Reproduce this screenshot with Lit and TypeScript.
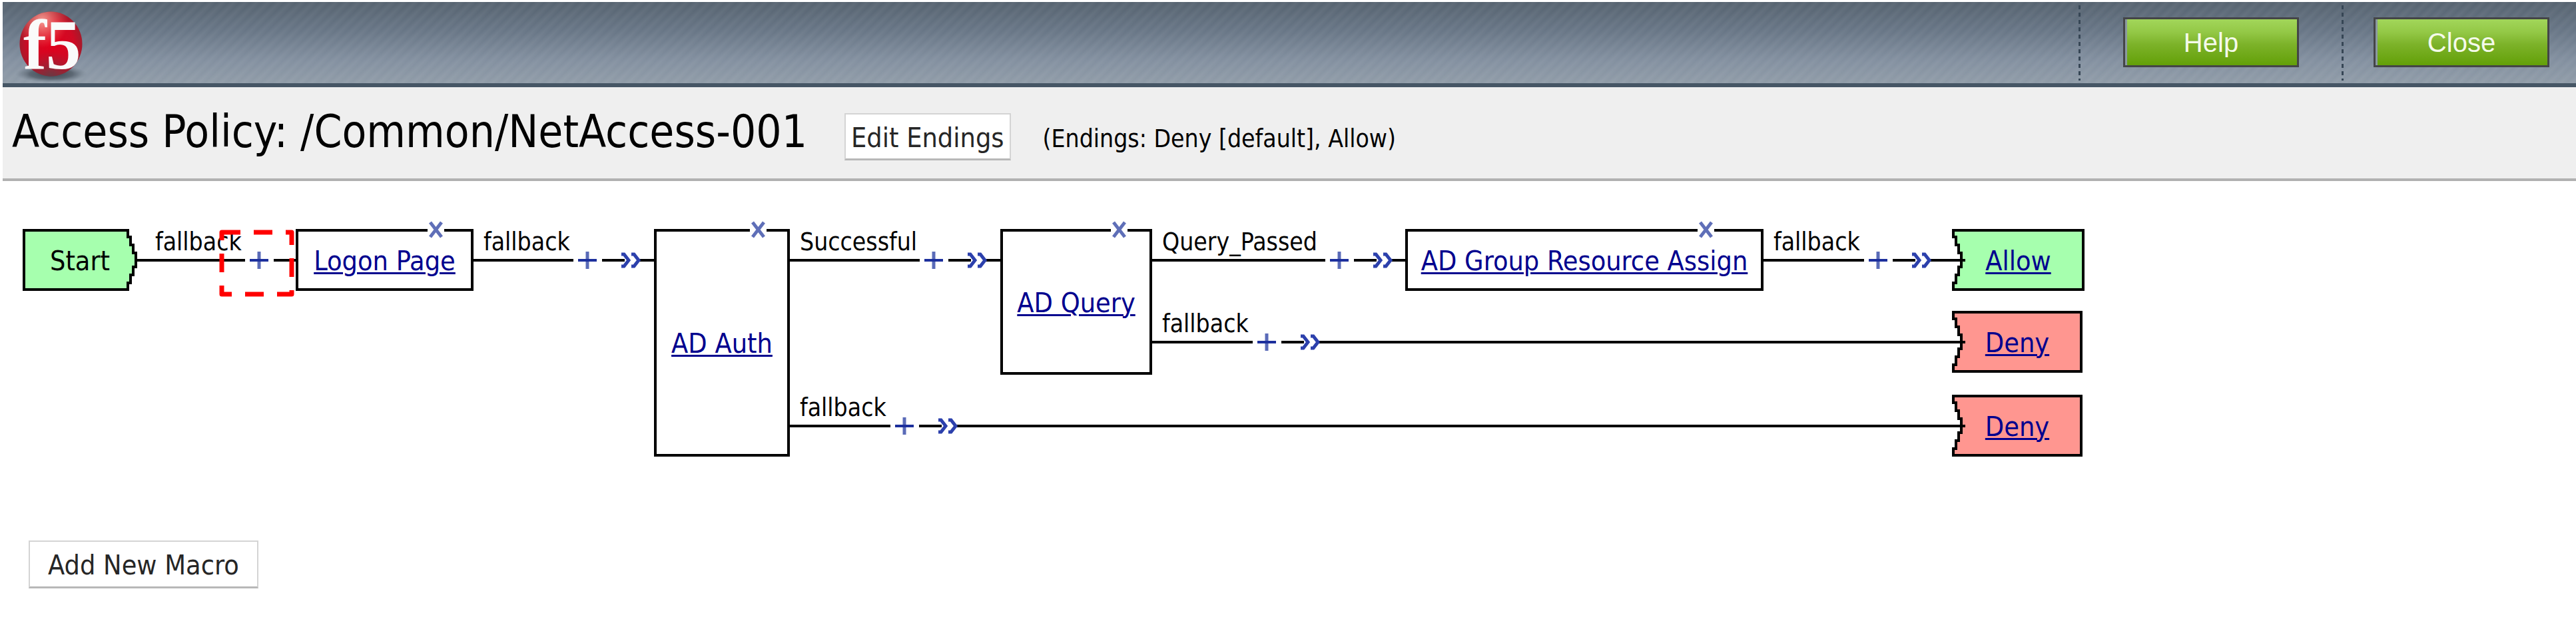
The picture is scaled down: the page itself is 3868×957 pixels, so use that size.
import { LitElement, html, svg, css } from "lit";
import { customElement } from "lit/decorators.js";
import { styleMap } from "lit/directives/style-map.js";
import { classMap } from "lit/directives/class-map.js";

interface PolicyNode {
  label: string;
  kind: "start" | "action" | "allow" | "deny";
  x: number;
  y: number;
  w: number;
  h: number;
  close?: number;
}

interface Branch {
  label: string;
  from: number;
  to: number;
  y: number;
  plus: number;
  arrow: boolean;
}

const ROW = [119, 242, 368];

const NODES: PolicyNode[] = [
  { label: "Start", kind: "start", x: 34, y: 72, w: 172, h: 93 },
  { label: "Logon Page", kind: "action", x: 444, y: 72, w: 267, h: 93, close: 654 },
  { label: "AD Auth", kind: "action", x: 982, y: 72, w: 204, h: 342, close: 1138 },
  { label: "AD Query", kind: "action", x: 1502, y: 72, w: 228, h: 219, close: 1680 },
  { label: "AD Group Resource Assign", kind: "action", x: 2110, y: 72, w: 538, h: 93, close: 2561 },
  { label: "Allow", kind: "allow", x: 2931, y: 72, w: 199, h: 93 },
  { label: "Deny", kind: "deny", x: 2931, y: 195, w: 196, h: 93 },
  { label: "Deny", kind: "deny", x: 2931, y: 321, w: 196, h: 93 },
];

const BRANCHES: Branch[] = [
  { label: "fallback", from: 205, to: 444, y: ROW[0], plus: 389, arrow: false },
  { label: "fallback", from: 711, to: 982, y: ROW[0], plus: 882, arrow: true },
  { label: "Successful", from: 1186, to: 1502, y: ROW[0], plus: 1402, arrow: true },
  { label: "Query_Passed", from: 1730, to: 2110, y: ROW[0], plus: 2011, arrow: true },
  { label: "fallback", from: 2648, to: 2951, y: ROW[0], plus: 2820, arrow: true },
  { label: "fallback", from: 1730, to: 2951, y: ROW[1], plus: 1902, arrow: true },
  { label: "fallback", from: 1186, to: 2951, y: ROW[2], plus: 1358, arrow: true },
];

@customElement("app-root")
export class AppRoot extends LitElement {
  static styles = css`
    :host {
      display: block;
      background: #fff;
      color: #000;
      font-family: "DejaVu Sans Condensed", "DejaVu Sans", Tahoma, sans-serif;
    }
    * {
      box-sizing: border-box;
    }
    .page {
      padding: 3px 0 0 4px;
    }
    .top {
      display: flex;
      align-items: stretch;
      justify-content: space-between;
      height: 128px;
      border-bottom: 6px solid #465665;
      background:
        repeating-linear-gradient(135deg, #ffffff00, #ffffff0c 6px, #ffffff00 12px),
        linear-gradient(#566370, #687686 35%, #8390a0 72%, #909ca8);
    }
    .logo {
      display: block;
      width: 140px;
      height: 122px;
    }
    .tools {
      display: flex;
      padding-right: 40px;
    }
    .tool {
      display: flex;
      align-items: flex-start;
      padding: 23px 64px 0 0;
    }
    .tool:last-child {
      padding-right: 0;
    }
    .rule {
      width: 3px;
      height: 113px;
      margin-top: -18px;
      margin-right: 64px;
      background: repeating-linear-gradient(#364655 0 6px, transparent 6px 11px);
    }
    .tool:last-child .rule {
      margin-right: 45px;
    }
    .green {
      width: 264px;
      height: 75px;
      padding: 0;
      border: 3px solid #444547;
      background: linear-gradient(#a2d65a, #93c846 28%, #7cb229 55%, #63a008);
      box-shadow: inset 3px 0 0 #8b99a0;
      color: #f4faea;
      font: 40px/48px "Liberation Sans", Arial, sans-serif;
      cursor: pointer;
    }
    .bar {
      display: flex;
      align-items: baseline;
      padding: 27px 14px 27px;
      border-bottom: 4px solid #b1b1b1;
      background: #efefef;
    }
    .bar h1 {
      margin: 0;
      font-size: 67px;
      line-height: 80px;
      font-weight: 400;
    }
    .plain {
      padding: 11px 8px 7px;
      border: 2px solid #d4d4d4;
      border-bottom: 3px solid #b8b8b8;
      background: #fff;
      color: #262626;
      font: inherit;
      font-size: 41px;
      line-height: 48px;
      cursor: pointer;
    }
    .bar .plain {
      margin: 0 48px 0 56px;
    }
    .endings {
      font-size: 37px;
      line-height: 48px;
    }
    .diagram {
      position: relative;
      height: 540px;
      overflow: hidden;
    }
    .wires {
      position: absolute;
      left: -4px;
      top: 0;
      width: 100%;
      height: 100%;
      overflow: visible;
    }
    .canvas {
      position: absolute;
      inset: 0 0 0 -4px;
    }
    .node {
      position: absolute;
      display: flex;
      align-items: center;
      justify-content: center;
      padding-top: 2px;
      font-size: 41px;
      line-height: 48px;
      white-space: nowrap;
    }
    .node.action {
      border: 4px solid #000;
      background: #fff;
    }
    .node a {
      color: #00008e;
      text-decoration-thickness: 3px;
      text-underline-offset: 3px;
    }
    .branch {
      position: absolute;
      font-size: 37px;
      line-height: 44px;
      white-space: nowrap;
    }
    .icon {
      position: absolute;
      display: block;
      padding: 0;
      border: 0;
      background: #fff;
      cursor: pointer;
    }
    .icon svg {
      display: block;
    }
    .mark {
      position: absolute;
      left: 0;
      top: 0;
      width: 100%;
      height: 100%;
      pointer-events: none;
    }
    .foot {
      padding: 0 39px 73px;
    }
    .foot .plain {
      padding: 11px 27px 8px;
    }
  `;

  private px(x: number, y: number, w?: number, h?: number) {
    return styleMap({
      left: `${x}px`,
      top: `${y}px`,
      ...(w ? { width: `${w}px` } : {}),
      ...(h ? { height: `${h}px` } : {}),
    });
  }

  private shape(n: PolicyNode) {
    const t = n.y + 2;
    const l = n.x + 2;
    const r = n.x + n.w - 2;
    if (n.kind === "start") {
      return svg`<path d="M${l} ${t}H${r - 12}v10h4v12h4v12h4v21h-4v12h-4v12h-4v10H${l}Z" fill="#a6ffae" stroke="#000" stroke-width="4"/>`;
    }
    const fill = n.kind === "allow" ? "#a6ffae" : "#ff9690";
    return svg`<path d="M${l} ${t}H${r}v89H${l}v-10h4v-12h4v-12h4v-21h-4v-12h-4v-12h-4Z" fill=${fill} stroke="#000" stroke-width="4"/>`;
  }

  private wire(b: Branch) {
    const gapL = b.plus - 21;
    const gapR = b.plus + 22;
    const y = b.y;
    const a = b.plus + 50;
    return svg`
      <path d="M${b.from} ${y}H${gapL}M${gapR} ${y}H${b.arrow ? a + 6 : b.to}${b.arrow ? `M${a + 28} ${y}H${b.to}` : ""}" stroke="#000" stroke-width="4" fill="none"/>
      ${b.arrow
        ? svg`<path d="M${a + 1} ${y - 9}h4l7 9l-7 9h-4M${a + 16} ${y - 9}h4l7 9l-7 9h-4" stroke="#2c40ac" stroke-width="5" fill="none"/>`
        : ""}`;
  }

  render() {
    return html`
      <div class="page">
        <header class="top">
          <svg class="logo" viewBox="4 3 140 122" role="img" aria-label="f5">
            <defs>
              <radialGradient id="ball" cx="50%" cy="50%" r="52%">
                <stop offset="0" stop-color="#e0001c" />
                <stop offset=".7" stop-color="#d00a24" />
                <stop offset="1" stop-color="#a01c2c" />
              </radialGradient>
              <radialGradient id="shine" cx="36%" cy="14%" r="42%">
                <stop offset="0" stop-color="#ffc0b0" stop-opacity=".8" />
                <stop offset="1" stop-color="#ff8070" stop-opacity="0" />
              </radialGradient>
              <radialGradient id="shade" cx="50%" cy="100%" r="40%">
                <stop offset="0" stop-color="#5a4048" stop-opacity=".8" />
                <stop offset="1" stop-color="#803040" stop-opacity="0" />
              </radialGradient>
              <radialGradient id="floor">
                <stop offset="0" stop-color="#38424c" />
                <stop offset=".6" stop-color="#47525d" stop-opacity=".7" />
                <stop offset="1" stop-color="#6d7a87" stop-opacity="0" />
              </radialGradient>
            </defs>
            <ellipse cx="77" cy="111" rx="54" ry="13" fill="url(#floor)" />
            <ellipse cx="76.500" cy="66" rx="47" ry="48.500" fill="url(#ball)" />
            <ellipse cx="76.500" cy="66" rx="47" ry="48.500" fill="url(#shine)" />
            <ellipse cx="76.500" cy="66" rx="47" ry="48.500" fill="url(#shade)" />
            <g font-family="Liberation Serif, serif" font-weight="700" font-size="105" fill="#fafafa">
              <text x="35" y="103">f</text>
              <text x="69" y="103">5</text>
            </g>
          </svg>
          <nav class="tools">
            <div class="tool"><span class="rule"></span><button class="green">Help</button></div>
            <div class="tool"><span class="rule"></span><button class="green">Close</button></div>
          </nav>
        </header>
        <section class="bar">
          <h1>Access Policy: /Common/NetAccess-001</h1>
          <button class="plain">Edit Endings</button>
          <span class="endings">(Endings: Deny [default], Allow)</span>
        </section>
        <main class="diagram">
          <svg class="wires">
            ${NODES.filter((n) => n.kind !== "action").map((n) => this.shape(n))}
            ${BRANCHES.map((b) => this.wire(b))}
          </svg>
          <div class="canvas">
            ${NODES.map(
              (n) => html`<div
                class=${classMap({ node: true, action: n.kind === "action" })}
                style=${this.px(n.x, n.y, n.w, n.h)}
              >
                ${n.kind === "start" ? n.label : html`<a href="#">${n.label}</a>`}
              </div>`,
            )}
            ${NODES.filter((n) => n.close).map(
              (n) => html`<button class="icon" aria-label="Delete ${n.label}" style=${this.px(n.close! - 12, n.y - 12)}>
                <svg width="25" height="26" viewBox="0 0 25 26">
                  <path d="M4 2L21 24M21 2L4 24" stroke="#5f6fb8" stroke-width="5" fill="none" />
                </svg>
              </button>`,
            )}
            ${BRANCHES.map(
              (b) => html`
                <span class="branch" style=${this.px(b.from + (b.from === 205 ? 28 : 15), b.y - 49)}>${b.label}</span>
                <button class="icon" aria-label="Add item on ${b.label}" style=${this.px(b.plus - 14, b.y - 14)}>
                  <svg width="28" height="28" viewBox="0 0 28 28">
                    <path d="M14 1V27" stroke="#5a6bb8" stroke-width="5" />
                    <path d="M0 14H28" stroke="#1c2f9c" stroke-width="4" />
                  </svg>
                </button>
              `,
            )}
            <svg class="mark">
              <path
                d="M333 77H438V170H333Z"
                fill="none"
                stroke="#f00"
                stroke-width="7"
                stroke-linejoin="round"
                stroke-dasharray="28 20"
              />
            </svg>
          </div>
        </main>
        <div class="foot"><button class="plain">Add New Macro</button></div>
      </div>
    `;
  }
}
